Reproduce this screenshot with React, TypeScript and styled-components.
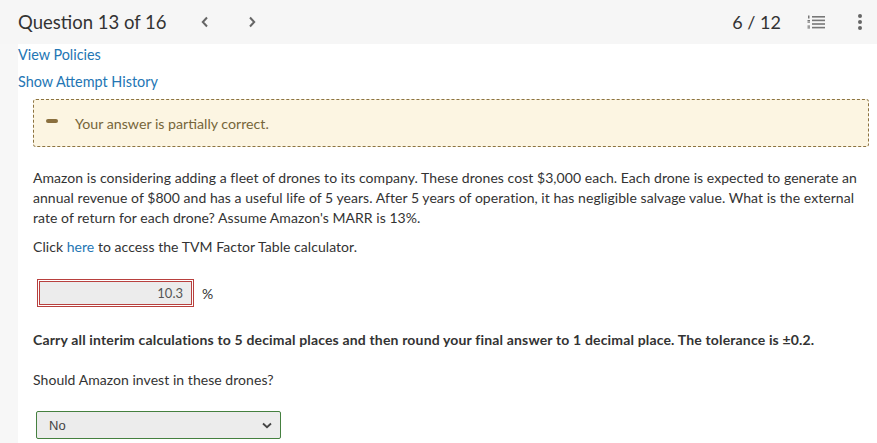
import React from "react";
import styled, { createGlobalStyle } from "styled-components";

const Global = createGlobalStyle`
  html, body { margin: 0; padding: 0; }
  body {
    background: #f7f7f7;
    font-family: Lato, "Open Sans", sans-serif;
    color: #333;
    width: 877px;
    height: 443px;
    overflow: hidden;
  }
`;

const Header = styled.header`
  height: 44px;
  background: #f6f6f6;
  display: flex;
  align-items: center;
  padding: 0 0 0 18px;
  box-sizing: border-box;
`;

const Title = styled.h1`
  margin: 0;
  font-size: 18.5px;
  font-weight: 400;
  color: #333;
  line-height: 28px;
`;

const NavGroup = styled.div`
  display: flex;
  align-items: center;
  gap: 31px;
  margin-left: 30px;
`;

const IconBtn = styled.button`
  background: none;
  border: 0;
  padding: 0;
  margin: 0;
  width: 16px;
  height: 24px;
  display: flex;
  align-items: center;
  justify-content: center;
  color: #666;
  cursor: pointer;
`;

const Spacer = styled.div`
  flex: 1;
`;

const Counter = styled.span`
  font-size: 18px;
  color: #333;
  margin-right: 25px;
`;

const RightIcon = styled(IconBtn)<{ $mr: number }>`
  width: 20px;
  margin-right: ${(p) => p.$mr}px;
`;

const Main = styled.main`
  margin-left: 18px;
  background: #fff;
  height: 399px;
  padding: 1px 8px 0 0;
  box-sizing: border-box;
`;

const LinkRow = styled.a<{ $mt: number }>`
  display: block;
  width: max-content;
  margin-top: ${(p) => p.$mt}px;
  font-size: 14.4px;
  line-height: 20px;
  color: #2476b4;
  text-decoration: none;
`;

const Content = styled.section`
  padding-left: 15px;
`;

const Alert = styled.div`
  margin-top: 7px;
  height: 48px;
  box-sizing: border-box;
  border: 1px dashed #8c7340;
  border-radius: 3px;
  background: #fcf5e2;
  display: flex;
  align-items: center;
  padding-left: 12px;
`;

const Minus = styled.span`
  width: 12px;
  height: 4px;
  border-radius: 2px;
  background: #8a6f3e;
  margin-right: 17px;
  margin-top: -4px;
`;

const AlertText = styled.span`
  font-size: 14.2px;
  color: #76653a;
`;

const Para = styled.p<{ $mt: number; $bold?: boolean }>`
  margin: ${(p) => p.$mt}px 0 0;
  font-size: 14px;
  letter-spacing: ${(p) => (p.$bold ? 0.165 : 0.05)}px;
  line-height: 20px;
  color: #333;
  font-weight: ${(p) => (p.$bold ? 700 : 400)};
`;

const InlineLink = styled.a`
  color: #2476b4;
  text-decoration: none;
`;

const AnswerRow = styled.div`
  margin-top: 22px;
  margin-left: 4px;
  display: flex;
  align-items: center;
  gap: 8px;
`;

const NumInput = styled.div`
  width: 157px;
  height: 28px;
  box-sizing: border-box;
  border: 3px double #b8403e;
  background: #ececec;
  background-clip: padding-box;
  display: flex;
  align-items: center;
  justify-content: flex-end;
  padding-right: 8px;
  font-size: 13px;
  color: #555;
`;

const Unit = styled.span`
  font-size: 14px;
  color: #333;
`;

const Select = styled.div`
  margin-top: 21px;
  margin-left: 3px;
  width: 245px;
  height: 28px;
  box-sizing: border-box;
  border: 1px solid #45803f;
  border-radius: 2px;
  background: #ececec;
  display: flex;
  align-items: center;
  justify-content: space-between;
  padding: 0 8px 0 12px;
  font-family: "Liberation Sans", Arial, sans-serif;
  font-size: 13px;
  color: #444;
`;

const ListIcon = () => (
  <svg width="18" height="14" viewBox="0 0 18 14">
    <g fill="#777">
      <rect x="5" y="1" width="13" height="1.6" />
      <rect x="5" y="4.6" width="13" height="1.6" />
      <rect x="5" y="8.2" width="13" height="1.6" />
      <rect x="5" y="11.8" width="13" height="1.6" />
      <rect x="1" y="0.5" width="1.5" height="3" />
      <rect x="0.5" y="5" width="2.5" height="1.2" />
      <rect x="0.5" y="6.5" width="2.5" height="1.2" />
      <rect x="0.5" y="10.5" width="2.5" height="1.2" />
      <rect x="0.5" y="12.3" width="2.5" height="1.2" />
    </g>
  </svg>
);

const Kebab = () => (
  <svg width="6" height="18" viewBox="0 0 6 18">
    <g fill="#666">
      <circle cx="3" cy="3" r="2" />
      <circle cx="3" cy="9" r="2" />
      <circle cx="3" cy="15" r="2" />
    </g>
  </svg>
);

const Chevron = ({ dir }: { dir: "left" | "right" }) => (
  <svg width="8" height="12" viewBox="0 0 8 12">
    <path
      d={dir === "left" ? "M6 1.5 L1.8 6 L6 10.5" : "M2 1.5 L6.2 6 L2 10.5"}
      fill="none"
      stroke="#666"
      strokeWidth="2"
    />
  </svg>
);

const SelectChevron = () => (
  <svg width="10" height="7" viewBox="0 0 10 7">
    <path d="M1 1.5 L5 5.2 L9 1.5" fill="none" stroke="#444" strokeWidth="1.8" />
  </svg>
);

export default function App() {
  return (
    <>
      <Global />
      <Header>
        <Title>Question 13 of 16</Title>
        <NavGroup>
          <IconBtn aria-label="Previous">
            <Chevron dir="left" />
          </IconBtn>
          <IconBtn aria-label="Next">
            <Chevron dir="right" />
          </IconBtn>
        </NavGroup>
        <Spacer />
        <Counter>6 / 12</Counter>
        <RightIcon $mr={24} aria-label="Question list">
          <ListIcon />
        </RightIcon>
        <RightIcon $mr={7} aria-label="More">
          <Kebab />
        </RightIcon>
      </Header>
      <Main>
        <LinkRow $mt={0} href="#">View Policies</LinkRow>
        <LinkRow $mt={7} href="#">Show Attempt History</LinkRow>
        <Content>
          <Alert>
            <Minus />
            <AlertText>Your answer is partially correct.</AlertText>
          </Alert>
          <Para $mt={21}>
            Amazon is considering adding a fleet of drones to its company. These drones cost $3,000 each. Each drone is
            expected to generate an annual revenue of $800 and has a useful life of 5 years. After 5 years of operation,
            it has negligible salvage value. What is the external rate of return for each drone? Assume Amazon's MARR is
            13%.
          </Para>
          <Para $mt={9}>
            Click <InlineLink href="#">here</InlineLink> to access the TVM Factor Table calculator.
          </Para>
          <AnswerRow>
            <NumInput>10.3</NumInput>
            <Unit>%</Unit>
          </AnswerRow>
          <Para $mt={23} $bold>
            Carry all interim calculations to 5 decimal places and then round your final answer to 1 decimal place. The
            tolerance is ±0.2.
          </Para>
          <Para $mt={20}>Should Amazon invest in these drones?</Para>
          <Select>
            <span>No</span>
            <SelectChevron />
          </Select>
        </Content>
      </Main>
    </>
  );
}
